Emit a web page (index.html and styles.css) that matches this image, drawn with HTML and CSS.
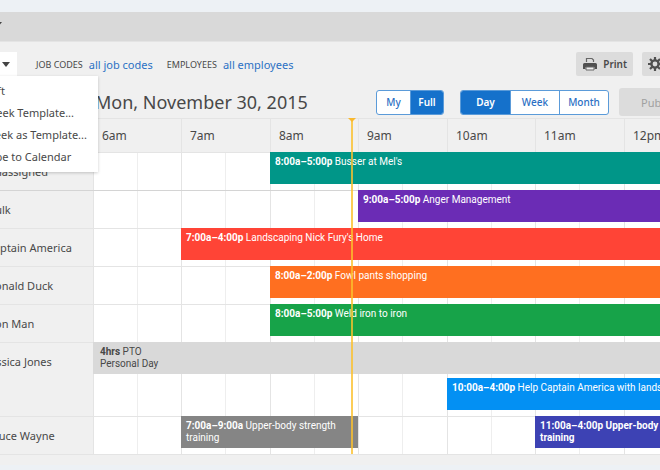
FILE: index.html
```html
<!DOCTYPE html>
<html lang="en">
<head>
  <meta charset="UTF-8" />
  <meta name="viewport" content="width=device-width, initial-scale=1.0" />
  <title>Schedule</title>
  <link rel="stylesheet" href="styles.css">
</head>
<body>
  <div class="app">
    <div class="topbar"><span class="caret"></span></div>

    <div class="toolbar">
      <div class="options">
        <button class="options-btn" aria-label="Options" aria-expanded="true"><span class="caret"></span></button>
        <ul class="menu">
          <li><button>Add Shift</button></li>
          <li><button>Load Week Template...</button></li>
          <li><button>Save Week as Template...</button></li>
          <li><button>Subscribe to Calendar</button></li>
        </ul>
      </div>
      <div class="filters">
        <span class="filter">JOB CODES <a href="#">all job codes</a></span>
        <span class="filter">EMPLOYEES <a href="#">all employees</a></span>
      </div>
      <div class="actions">
        <button class="btn print">
          <svg width="16" height="16" viewBox="0 0 16 16">
            <path d="M4.500 6V2.500h5.500l1.500 1.500v2" fill="none" stroke="#666" stroke-width="1.2" />
            <path d="M2.500 7h11a1.500 1.500 0 0 1 1.500 1.500V13h-2.500v-2h-9v2H1V8.500A1.500 1.500 0 0 1 2.500 7z" fill="#505050" />
            <path d="M4 11h8v3H4z" fill="#eee" stroke="#666" stroke-width="1" />
          </svg>
          Print
        </button>
        <button class="btn gear" aria-label="Settings">
          <svg width="14" height="14" viewBox="0 0 14 14">
            <circle cx="7" cy="7" r="3.600" fill="none" stroke="#505050" stroke-width="2.400" />
            <path d="M7 0v3M7 11v3M0 7h3M11 7h3M2 2l2 2M10 10l2 2M12 2l-2 2M4 10l-2 2" stroke="#505050" stroke-width="2.200" />
          </svg>
          <span class="caret"></span>
        </button>
      </div>
    </div>

    <div class="heading">
      <h1>Mon, November 30, 2015</h1>
      <div class="segmented who">
        <button>My</button>
        <button class="active">Full</button>
      </div>
      <div class="segmented range">
        <button class="active">Day</button>
        <button>Week</button>
        <button>Month</button>
      </div>
      <button class="publish" disabled>Publish</button>
    </div>

    <div class="schedule">
      <div class="row hours">
        <div class="name"></div>
        <div class="track">
          <span>6am</span>
          <span>7am</span>
          <span>8am</span>
          <span>9am</span>
          <span>10am</span>
          <span>11am</span>
          <span>12pm</span>
        </div>
      </div>
      <div class="row unassigned">
        <div class="name">Unassigned</div>
        <div class="track">
          <div class="shift from-8 teal"><b>8:00a–5:00p</b> Busser at Mel's</div>
        </div>
      </div>
      <div class="row">
        <div class="name">Hulk</div>
        <div class="track">
          <div class="shift from-9 purple"><b>9:00a–5:00p</b> Anger Management</div>
        </div>
      </div>
      <div class="row">
        <div class="name">Captain America</div>
        <div class="track">
          <div class="shift from-7 red"><b>7:00a–4:00p</b> Landscaping Nick Fury's Home</div>
        </div>
      </div>
      <div class="row">
        <div class="name">Donald Duck</div>
        <div class="track">
          <div class="shift from-8 orange"><b>8:00a–2:00p</b> Fowl pants shopping</div>
        </div>
      </div>
      <div class="row">
        <div class="name">Iron Man</div>
        <div class="track">
          <div class="shift from-8 green"><b>8:00a–5:00p</b> Weld iron to iron</div>
        </div>
      </div>
      <div class="row double">
        <div class="name">Jessica Jones</div>
        <div class="track">
          <div class="shift pto"><b>4hrs</b> PTO<br>Personal Day</div>
          <div class="shift from-10 blue"><b>10:00a–4:00p</b> Help Captain America with landscaping</div>
        </div>
      </div>
      <div class="row">
        <div class="name">Bruce Wayne</div>
        <div class="track">
          <div class="shift from-7 to-9 gray"><b>7:00a–9:00a</b> Upper-body strength training</div>
          <div class="shift from-11 indigo"><b>11:00a–4:00p Upper-body<br>training</b></div>
        </div>
      </div>
      <div class="now"></div>
    </div>
  </div>
</body>
</html>
```
FILE: styles.css
```css
:root {
  --bg: #f0f0f0;
  --line: #e4e4e4;
  --blue: #1571cb;
  --text: #484848;
}

* {
  box-sizing: border-box;
}

body {
  margin: 0;
  padding: 12px 0 0;
  background-color: #edf1f5;
  color: var(--text);
  font-family: "Noto Sans", sans-serif;
  font-size: 11px;
  overflow: hidden;
}

/* the board is wider than the window on both sides */
.app {
  margin: 0 -41px 0 -16px;
  padding-bottom: 10px;
  background-color: var(--bg);
}

button {
  padding: 0;
  border: none;
  background: none;
  color: inherit;
  font: inherit;
  white-space: nowrap;
}

.topbar {
  display: flex;
  align-items: center;
  height: 30px;
  padding: 0 0 5px 10px;
  background-color: #d9d9d9;
  border-bottom: 1px solid #e4e4e4;
}

.caret {
  border: 4px solid transparent;
  border-top: 5px solid #444;
  border-bottom: 0;
}

/* toolbar */
.toolbar {
  display: flex;
  align-items: center;
  height: 44px;
}

.options {
  position: relative;
  width: 33px;
}

.options-btn {
  display: flex;
  align-items: center;
  justify-content: flex-end;
  width: 100%;
  height: 24px;
  padding-right: 7px;
  background-color: #fff;
}

.menu {
  position: absolute;
  top: 24px;
  right: -81px;
  z-index: 3;
  width: 148px;
  margin: 0;
  padding: 4px 0 4px 8px;
  background-color: #fff;
  box-shadow: 0 1px 3px rgba(0, 0, 0, 0.2);
  list-style: none;
}

.menu button {
  display: block;
  line-height: 22px;
}

.filters {
  display: flex;
  flex: 1;
  gap: 14px;
  padding-left: 19px;
}

.filter {
  display: flex;
  align-items: center;
  gap: 6px;
  font-size: 9px;
}

.filter a {
  color: #2b70c4;
  font-size: 11px;
  text-decoration: none;
}

.actions {
  display: flex;
  gap: 9px;
}

.btn {
  display: flex;
  align-items: center;
  gap: 5px;
  height: 24px;
  padding: 0 6px;
  border-radius: 2px;
  background-color: #dcdcdc;
  font-size: 10px;
  font-weight: 600;
}

.gear {
  justify-content: space-between;
  width: 59px;
}

/* date and view switches */
.heading {
  display: flex;
  align-items: center;
  height: 32px;
  padding-left: 111px;
}

.heading h1 {
  flex: 1;
  margin: 0;
  font-size: 18px;
  font-weight: 400;
  line-height: 24px;
}

.segmented {
  display: flex;
  height: 25px;
  border: 1px solid #5b9bd9;
  border-radius: 3px;
  background-color: #fff;
  color: #2b70c4;
  font-size: 10px;
  font-weight: 500;
  overflow: hidden;
}

.segmented button + button {
  border-left: 1px solid #5b9bd9;
}

.segmented .active {
  background-color: var(--blue);
  color: #fff;
  font-weight: 600;
}

.who {
  margin-right: 16px;
}

.who button {
  width: 33px;
}

.range {
  margin-right: 10px;
}

.range button {
  width: 49px;
}

.publish {
  width: 82px;
  height: 28px;
  border-radius: 3px;
  background-color: #dcdcdc;
  color: #a0a0a0;
}

/* schedule */
.schedule {
  position: relative;
  border-bottom: 1px solid var(--line);
}

.row {
  display: flex;
  min-height: 38px;
  border-top: 1px solid var(--line);
}

.name {
  flex: none;
  width: 111px;
  padding: 11px 0 0 3px;
  border-right: 2px solid var(--line);
  line-height: 16px;
}

/* one hour is two half-hour columns */
.track {
  display: grid;
  flex: 1;
  grid-template-columns: repeat(4, 44px 44px 44px 45px);
  align-content: start;
  margin-left: -2px;
  background-color: #fff;
  background-image:
    linear-gradient(90deg, var(--line) 1px, transparent 1px),
    linear-gradient(90deg, transparent 44px, #eee 44px, #eee 45px, transparent 45px),
    linear-gradient(90deg, transparent 88px, var(--line) 88px, var(--line) 89px, transparent 89px),
    linear-gradient(90deg, transparent 132px, #eee 132px, #eee 133px, transparent 133px);
  background-size: 177px 100%;
}

.hours {
  min-height: 34px;
}

.hours .name {
  border-right-color: transparent;
}

.hours .track {
  background: none;
}

.hours span {
  grid-column: span 2;
  padding-left: 8px;
  border-left: 1px solid var(--line);
  font-size: 12px;
  line-height: 33px;
}

.hours span:first-child {
  border-left-color: transparent;
}

.unassigned + .row {
  border-top-color: #d4d4d4;
}

.double {
  min-height: 74px;
}

.shift {
  height: 32px;
  margin-top: -1px;
  padding: 4px 5px;
  color: #fff;
  font-family: Roboto, sans-serif;
  font-size: 10px;
  line-height: 12px;
}

.pto {
  grid-column: 1 / -1;
  margin-bottom: 5px;
  padding-left: 7px;
  background-color: #d9d9d9;
  color: var(--text);
}

.from-7 { grid-column: 3 / -1; }
.from-8 { grid-column: 5 / -1; }
.from-9 { grid-column: 7 / -1; }
.from-10 { grid-column: 9 / -1; }
.from-11 { grid-column: 11 / -1; }
.to-9 { grid-column-end: 7; }

.teal { background-color: #009688; }
.purple { background-color: #6b2cb5; }
.red { background-color: #ff4436; }
.orange { background-color: #ff6f20; }
.green { background-color: #17a349; }
.blue { background-color: #0390f3; }
.gray { background-color: #858585; }
.indigo { background-color: #3d42b4; }

/* current time marker */
.now {
  position: absolute;
  top: 0;
  bottom: 0;
  left: 367px;
  width: 2px;
  background-color: rgba(251, 192, 45, 0.8);
}

.now::before {
  content: "";
  position: absolute;
  top: 0;
  left: -3px;
  border: 4px solid transparent;
  border-top-color: #f9b82e;
  border-bottom: 0;
}
```
